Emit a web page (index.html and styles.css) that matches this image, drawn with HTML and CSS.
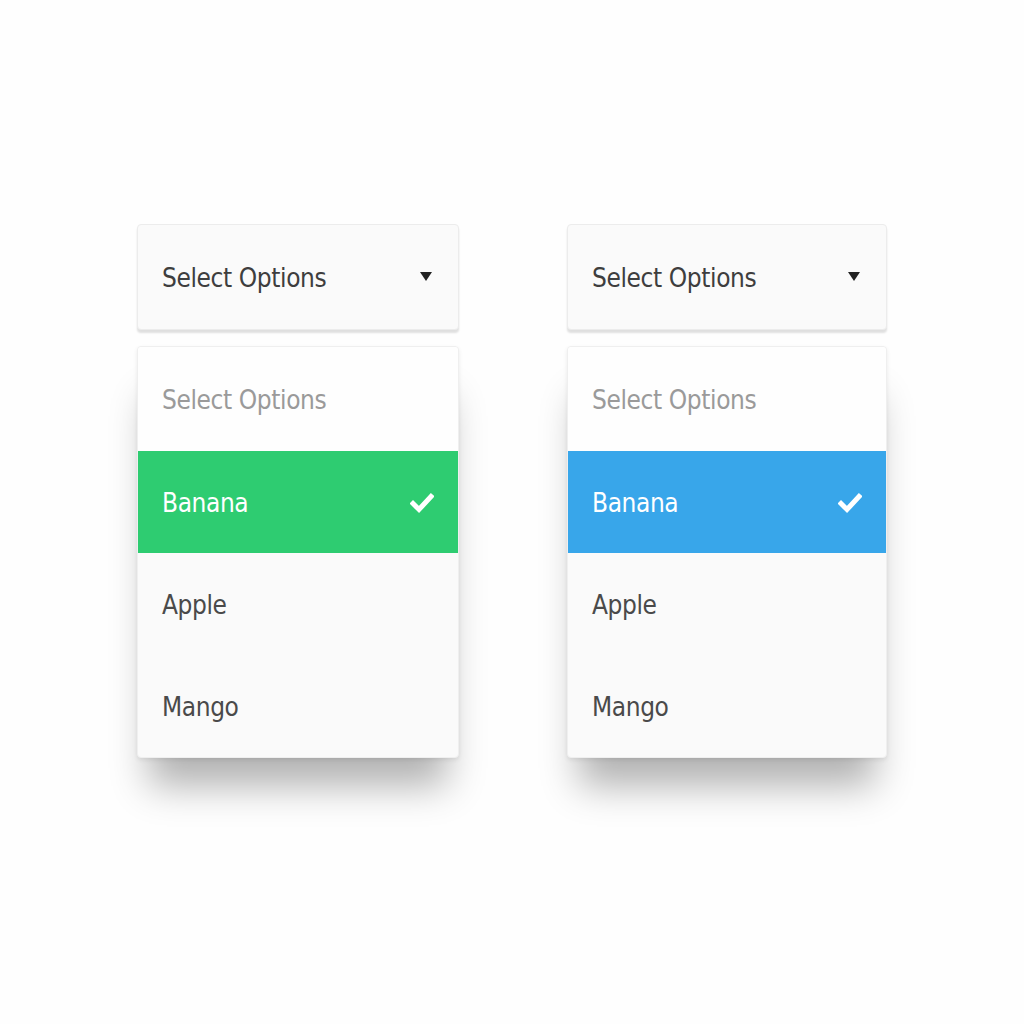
FILE: index.html
```html
<!DOCTYPE html>
<html>
<head>
<meta charset="utf-8">
<link rel="stylesheet" href="styles.css">
</head>
<body>
<div class="stage">
  <div class="widget">
    <div class="select">
      <span class="label">Select Options</span>
      <span class="arrow"></span>
    </div>
    <div class="menu">
      <div class="opt placeholder">Select Options</div>
      <div class="opt active green"><span>Banana</span>
        <svg class="check" viewBox="0 0 24 24" width="24" height="24"><path d="M3 12.5 L9 18.5 L21 5.5" fill="none" stroke="#fff" stroke-width="5" stroke-linecap="square"/></svg>
      </div>
      <div class="opt">Apple</div>
      <div class="opt">Mango</div>
    </div>
  </div>
  <div class="widget right">
    <div class="select">
      <span class="label">Select Options</span>
      <span class="arrow"></span>
    </div>
    <div class="menu">
      <div class="opt placeholder">Select Options</div>
      <div class="opt active blue"><span>Banana</span>
        <svg class="check" viewBox="0 0 24 24" width="24" height="24"><path d="M3 12.5 L9 18.5 L21 5.5" fill="none" stroke="#fff" stroke-width="5" stroke-linecap="square"/></svg>
      </div>
      <div class="opt">Apple</div>
      <div class="opt">Mango</div>
    </div>
  </div>
</div>
</body>
</html>
```

FILE: styles.css
```css
html, body {
  margin: 0;
  padding: 0;
  background: #fefefe;
}
body {
  width: 1024px;
  height: 1024px;
  font-family: "DejaVu Sans Condensed", "DejaVu Sans", sans-serif;
}
.stage {
  display: flex;
  gap: 108px;
  padding: 224px 0 0 137px;
}
.widget {
  width: 322px;
  display: flex;
  flex-direction: column;
  gap: 16px;
}
.widget.right {
  width: 320px;
}
.select {
  height: 106px;
  box-sizing: border-box;
  background: #fafafa;
  border: 1px solid #ececec;
  border-radius: 4px;
  box-shadow: 0 3px 2px rgba(0,0,0,0.12);
  display: flex;
  align-items: center;
  justify-content: space-between;
  padding: 2px 26px 0 24px;
}
.label {
  font-size: 26px;
  color: #3e3e3e;
  letter-spacing: -0.4px;
}
.arrow {
  width: 0;
  height: 0;
  border-left: 6px solid transparent;
  border-right: 6px solid transparent;
  border-top: 9px solid #222;
  margin-top: -4px;
}
.menu {
  background: #fafafa;
  border: 1px solid #efefef;
  border-radius: 4px;
  box-shadow: 0 40px 36px -12px rgba(0,0,0,0.3), 0 2px 4px rgba(0,0,0,0.08);
  overflow: hidden;
}
.opt {
  height: 102px;
  display: flex;
  align-items: center;
  justify-content: space-between;
  padding: 2px 24px 0;
  box-sizing: border-box;
  font-size: 26px;
  letter-spacing: -0.4px;
  color: #4a4a4a;
}
.placeholder {
  background: #fefefe;
  color: #9a9a9a;
  height: 104px;
}
.active {
  color: #fff;
  font-weight: normal;
}
.green { background: #2ecc71; }
.blue { background: #38a6ea; }
```
